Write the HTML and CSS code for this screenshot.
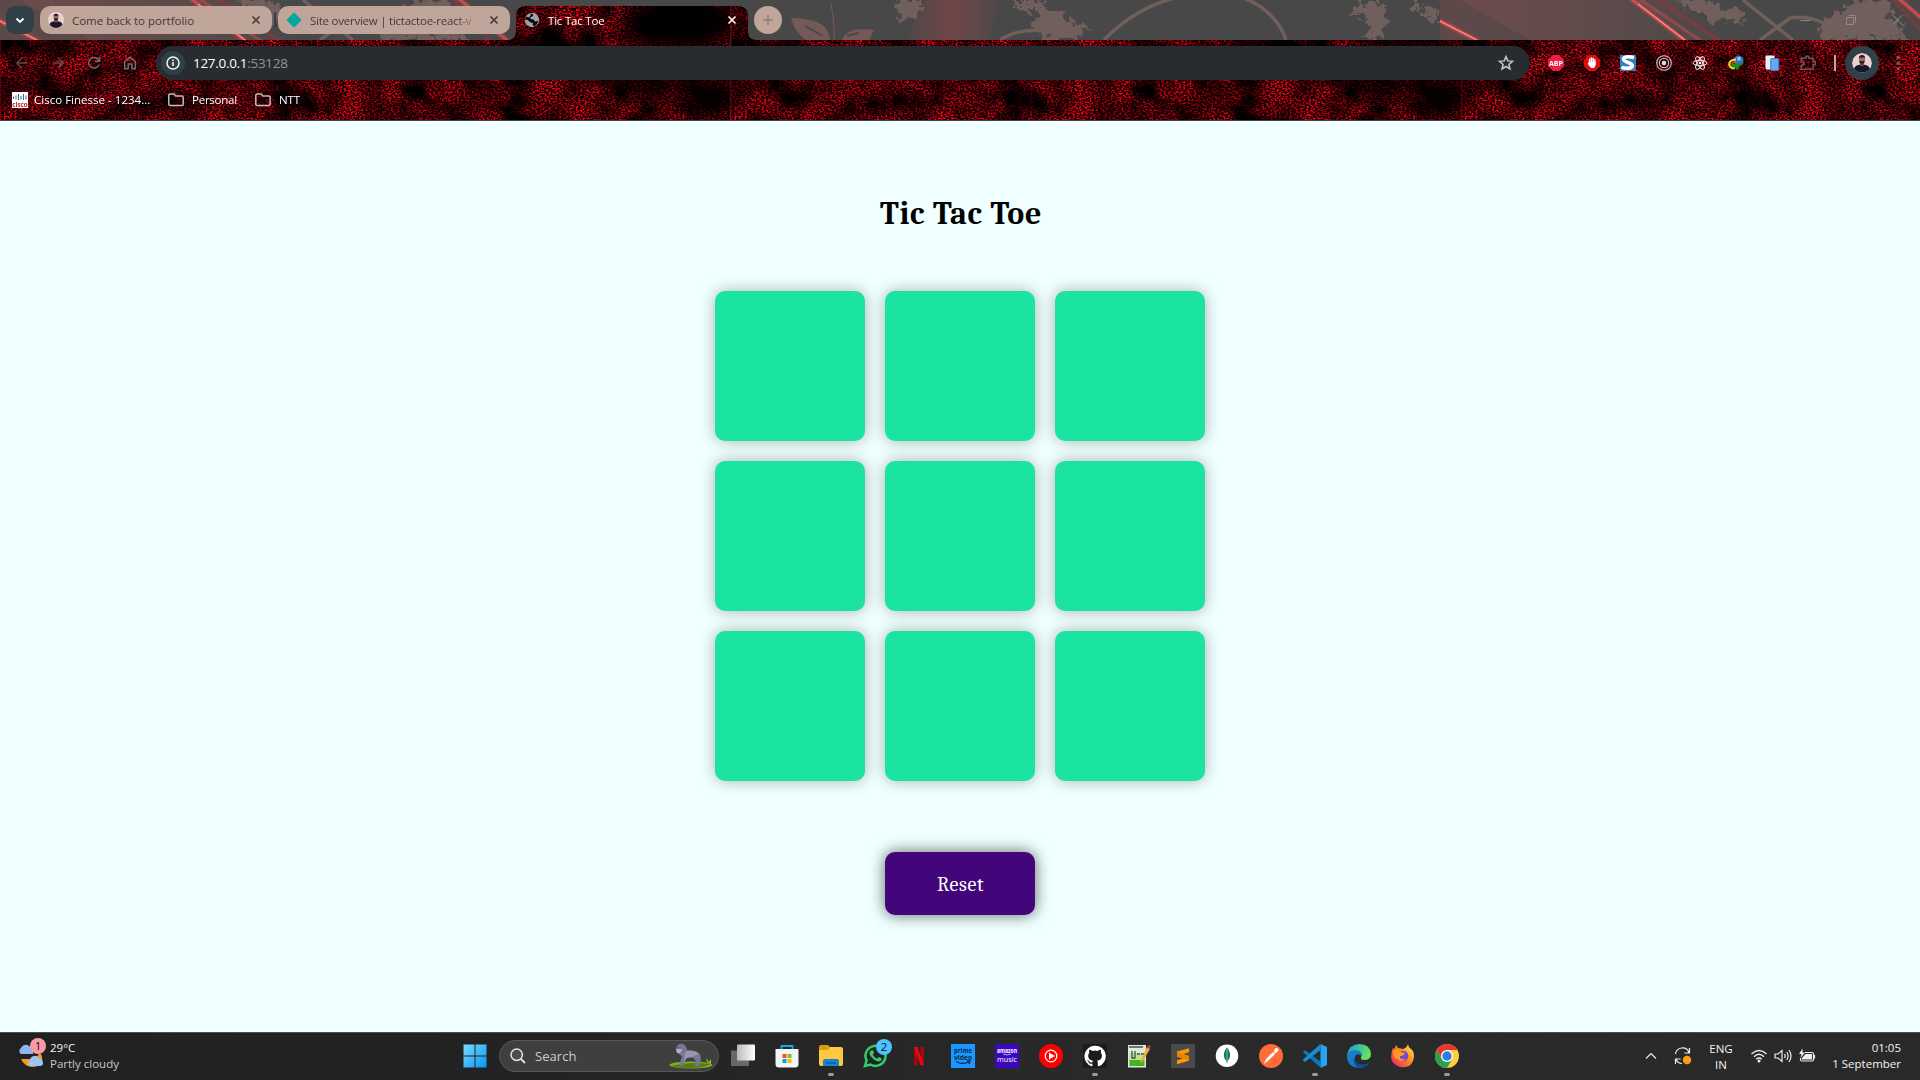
FILE: index.html
```html
<!DOCTYPE html>
<html lang="en">
<head>
<meta charset="utf-8">
<title>Tic Tac Toe</title>
<link rel="stylesheet" href="styles.css">
</head>
<body>
<div class="screen">
<header class="chrome">
  <svg class="theme" width="1920" height="121" viewBox="0 0 1920 121" aria-hidden="true">
    <defs>
      <filter id="grain" x="0" y="0" width="100%" height="100%" color-interpolation-filters="sRGB">
        <feTurbulence type="fractalNoise" baseFrequency="0.47 0.61" numOctaves="3" seed="8" result="fine"/>
        <feColorMatrix in="fine" values="3.2 0 0 0 -1.2  0 0 0 0 0  .3 0 0 0 -.12  0 0 0 0 1" result="red"/>
        <feTurbulence type="fractalNoise" baseFrequency="0.03 0.035" numOctaves="4" seed="21" result="coarse"/>
        <feColorMatrix in="coarse" values="0 2.3 0 0 -.52  0 2.3 0 0 -.52  0 2.3 0 0 -.52  0 0 0 0 1" result="patch"/>
        <feBlend in="red" in2="patch" mode="multiply"/>
      </filter>
      <filter id="soft" x="-50%" y="-50%" width="200%" height="200%"><feGaussianBlur stdDeviation="10"/></filter>
      <filter id="glow" x="-20%" y="-50%" width="140%" height="200%"><feGaussianBlur stdDeviation="1.2"/></filter>
      <filter id="ragged" x="-10%" y="-10%" width="120%" height="120%">
        <feTurbulence type="fractalNoise" baseFrequency="0.16" numOctaves="4" seed="4"/>
        <feDisplacementMap in="SourceGraphic" scale="20" xChannelSelector="R" yChannelSelector="G"/>
      </filter>
      <clipPath id="tile"><path d="M0 0h730.500v121H0z"/></clipPath>
      <g id="rock" clip-path="url(#tile)">
        <rect width="731" height="121" fill="#100" filter="url(#grain)"/>
        <g filter="url(#soft)" fill="#000">
          <ellipse cx="680" cy="22" rx="60" ry="30"/>
          <ellipse cx="712" cy="98" rx="24" ry="24"/>
          <ellipse cx="650" cy="78" rx="42" ry="12"/>
          <ellipse cx="474" cy="98" rx="14" ry="20" opacity=".6"/>
          <ellipse cx="20" cy="82" rx="50" ry="9" opacity=".5"/>
        </g>
        <path d="M.5 0v121" stroke="#700010" opacity=".7"/>
      </g>
      <linearGradient id="warm" x1="0" x2="1" y1="0" y2="0">
        <stop offset="0" stop-color="#714b4b"/><stop offset=".45" stop-color="#624b4b"/><stop offset="1" stop-color="#4a4848"/>
      </linearGradient>
      <linearGradient id="ember" x1="0" x2="1" y1="0" y2="0">
        <stop offset="0" stop-color="#4a4848"/><stop offset=".45" stop-color="#704646"/><stop offset=".7" stop-color="#634848"/><stop offset="1" stop-color="#4a4848"/>
      </linearGradient>
      <clipPath id="strip"><path d="M0 0H1920V40H757Q748 40 748 31V16Q748 6 738 6H526Q516 6 516 16V31Q516 40 507 40H0Z"/></clipPath>
      <clipPath id="art-tile"><path d="M0 0h1440v40H0z"/></clipPath>
      <g id="art" clip-path="url(#art-tile)">
        <rect width="1440" height="40" fill="#484848"/>
        <path d="M0 0h240l50 40H0z" fill="url(#warm)"/>
        <path d="M0 0h20l70 40H0z" fill="#484848" opacity=".45"/>
        <path d="M925 0h75l-10 40h-85z" fill="url(#ember)"/>
        <g fill="#705f5b" filter="url(#ragged)">
          <path d="M240 0h32l8 7h18l8 8-6 8-13-4-14 4-15-13-18-2z"/>
          <path d="M378 40l8-22 18-11 12-7h30l9 9-9 8 13 6 7 16z"/>
          <path d="M895 0h28l-6 14-12 7-8-7zM1015 0h30l-3 8 20 2 8 13 20 4-12 12h-36l-10-12 7-15-20-3z"/>
          <path d="M1364 0l18 4 4 22-8 14h-18l9-8-3-14-14-5zM1412 0h8v12h-6zM1424 6l14 5-2 13-10-7z"/>
        </g>
        <g fill="none" stroke="#705f5b" stroke-width="3.500">
          <path d="M1000 40Q1018 28 1045 31M1104 40C1150-8 1220-18 1256 4 1270 12 1282 26 1286 40M303 0l50 40M320 40l30-22q30-5 56 22"/>
        </g>
        <path d="M791 18q38 0 39 22h-24q-11-7-15-22zM842 40q6-14 32-10l-5 10z" fill="#755959"/>
        <path d="M805 26l18 10M847 36l12-3" stroke="#484848" stroke-width="2"/>
        <path d="M831 4q4 20 3 36" fill="none" stroke="#805858"/>
        <g filter="url(#glow)" stroke="#ff4a50" stroke-width="2.800">
          <path d="M-4 19L42 43M190-2l58 45M456-4l54 47"/>
          <path d="M198-2l66 45" stroke-width="1.400"/>
          <path d="M215-2l68 45M450-4l40 45" stroke="#823b3e"/>
        </g>
        <path d="M0 21l37 19M198 4l47 36" stroke="#ff8d87" stroke-width="1.200"/>
      </g>
    </defs>
    <use href="#rock"/><use href="#rock" x="730.500"/><use href="#rock" x="1461"/>
    <g clip-path="url(#strip)"><use href="#art"/><use href="#art" x="1440"/></g>
    <path d="M0 120.500H1920" stroke="#3d4347"/>
  </svg>

  <div class="tabs">
    <span class="tab-search"><svg width="10" height="7" viewBox="0 0 10 7"><path d="M1.500 1.500 5 5l3.500-3.500" fill="none" stroke="#fff" stroke-width="1.800"/></svg></span>
    <div class="tab">
      <svg width="16" height="16" viewBox="0 0 24 24"><use href="#portrait"/></svg>
      <span class="tab-title t1">Come back to portfolio</span>
      <svg class="close" width="10" height="10" viewBox="0 0 10 10"><path d="M1.500 1.500l7 7M8.500 1.500l-7 7"/></svg>
    </div>
    <i class="tab-rule"></i>
    <div class="tab">
      <svg width="16" height="16" viewBox="0 0 16 16"><path d="M8 .8 15.200 8 8 15.200.8 8z" fill="#05a5a0" stroke="#05a5a0" stroke-linejoin="round"/></svg>
      <span class="tab-title t2">Site overview | tictactoe-react-v</span>
      <svg class="close" width="10" height="10" viewBox="0 0 10 10"><path d="M1.500 1.500l7 7M8.500 1.500l-7 7"/></svg>
    </div>
    <div class="tab active">
      <svg width="16" height="16" viewBox="0 0 16 16"><circle cx="8" cy="8" r="7.200" fill="#9aa5ae"/><path d="M6 1.500c3 .2 4 1.500 2.500 3L6.500 5v2l3 .4 1.500 2 3.500-.6-2 4-2.500 1.700-1.300-1.500.3-2.300H7L3.500 8 1 7.500 2 4.500l3 1L7 3z" fill="#110608"/></svg>
      <span class="tab-title t3">Tic Tac Toe</span>
      <svg class="close" width="10" height="10" viewBox="0 0 10 10"><path d="M1.500 1.500l7 7M8.500 1.500l-7 7"/></svg>
    </div>
    <span class="new-tab"><svg width="12" height="12" viewBox="0 0 12 12"><path d="M6 1v10M1 6h10" stroke="#8f7c78" stroke-width="1.500"/></svg></span>
    <div class="win-controls">
      <svg width="11" height="12" viewBox="0 0 11 12"><path d="M.5 6.500h10" /></svg>
      <svg width="11" height="12" viewBox="0 0 11 12"><path d="M.5 3.500h7v7h-7zM2.500 1.500h6q1 0 1 1v6"/></svg>
      <svg width="11" height="12" viewBox="0 0 11 12"><path d="M.5 1l10 10M10.500 1l-10 10"/></svg>
    </div>
  </div>

  <div class="toolbar">
    <div class="nav">
      <svg class="dim" width="16" height="16" viewBox="0 0 16 16"><path d="M13.500 8H3M8 2.800 2.800 8 8 13.200"/></svg>
      <svg class="dim" width="16" height="16" viewBox="0 0 16 16"><path d="M2.500 8H13M8 2.800 13.200 8 8 13.200"/></svg>
      <svg width="16" height="16" viewBox="0 0 16 16"><path d="M13 9.500A5.300 5.300 0 1 1 12 4.300L13.300 6M13.500 1.800V6.300H9"/></svg>
      <svg width="16" height="16" viewBox="0 0 16 16"><path d="M2.700 6.500 8 2.300l5.300 4.200v7.200H9.800V9H6.200v4.700H2.700z"/></svg>
    </div>
    <div class="omnibox">
      <span class="site-info"><svg width="16" height="16" viewBox="0 0 16 16"><circle cx="8" cy="8" r="6" fill="none" stroke="#f4f6f6" stroke-width="1.500"/><path d="M8 7v4M8 4.500V6" stroke="#f4f6f6" stroke-width="1.600"/></svg></span>
      <span class="url"><b>127.0.0.1</b>:53128</span>
      <svg class="star" width="16" height="16" viewBox="0 0 16 16"><path d="M8 1.600l1.800 4.300 4.700.4-3.600 3.100 1.100 4.600L8 11.500 4 14l1.100-4.600-3.600-3.100 4.700-.4z" fill="none" stroke="#c5c8ca" stroke-width="1.500"/></svg>
    </div>
    <div class="extensions">
      <svg viewBox="0 0 16 16"><path d="M4.800 0h6.400L16 4.800v6.400L11.200 16H4.800L0 11.200V4.800z" fill="#ed1e45"/><text x="8" y="10.600" text-anchor="middle" font-size="7.500" font-weight="700" fill="#fff" textLength="14" lengthAdjust="spacingAndGlyphs">ABP</text></svg>
      <svg viewBox="0 0 16 16"><path d="M4.800 0h6.400L16 4.800v6.400L11.200 16H4.800L0 11.200V4.800z" fill="#e40d0d"/><path d="M5.600 8V4.300M7.400 7.500V3M9.200 7.500V3.500M10.900 8V5" stroke="#fff" stroke-width="1.500" stroke-linecap="round"/><path d="M4.900 7h6.800v3l-1.500 3H7.100L5 10.800 3.700 8.500z" fill="#fff"/></svg>
      <svg viewBox="0 0 16 16"><path d="M0 0h16v16H0z" fill="#377fb9"/><path d="M14 2.500Q5 .6 3.500 3.600C2.500 8 13 7 12.300 11 11.600 14 5 13.500 1.500 12.400" fill="none" stroke="#fff" stroke-width="3.500"/></svg>
      <svg viewBox="0 0 16 16"><g fill="none" stroke="#ccc9c9" stroke-width="1.100"><circle cx="8" cy="8" r="7.300"/><circle cx="8" cy="8" r="4.700"/></g><circle cx="8" cy="8" r="2.300" fill="#ddd"/></svg>
      <svg viewBox="0 0 16 16"><g fill="none" stroke="#eee" stroke-width="1"><ellipse cx="8" cy="8" rx="7" ry="2.700"/><ellipse cx="8" cy="8" rx="7" ry="2.700" transform="rotate(60 8 8)"/><ellipse cx="8" cy="8" rx="7" ry="2.700" transform="rotate(120 8 8)"/></g><circle cx="8" cy="8" r="1.300" fill="#fff"/></svg>
      <svg viewBox="0 0 16 16"><circle cx="10.500" cy="5.500" r="5" fill="#3973bd"/><circle cx="11" cy="3.800" r="2" fill="#8ac0eb"/><path d="M8 4.500Q1 5 1.300 9.500 2 13.500 7 13" fill="none" stroke="#e7dc24" stroke-width="2.200"/><path d="M8 7Q4 7 3.500 10" fill="none" stroke="#d94927" stroke-width="1.300"/><path d="M4 9l12-1-5 4-2 4-1-3-4-1z" fill="#168e22"/></svg>
      <svg viewBox="0 0 16 16"><rect x="1.500" y=".5" width="9" height="14" rx="1" fill="#e9f0f8"/><rect x="6.700" y="3.500" width="8" height="12" rx="1" fill="#65a6f5" stroke="#3f7ec5"/></svg>
      <svg viewBox="0 0 16 16"><path d="M1.200 3.300h4.600V1.200h2.900v2.100h4.500v3.500h2v3h-2v4.400h-12v-3.800q2.800 0 2.800-1.800T1.200 6.800z" fill="none" stroke="#625b5d" stroke-width="1.500" stroke-linejoin="round"/></svg>
    </div>
    <i class="tool-rule"></i>
    <span class="profile"><svg width="20" height="20" viewBox="0 0 24 24"><g id="portrait"><circle cx="12" cy="12" r="12" fill="#ead0d1"/><path d="M2.500 19Q3 15 9 14l3 1.500 3-1.500q6 1 6.500 5A12 12 0 0 1 2.500 19z" fill="#17182d"/><path d="M9.500 10h5v5L12 16l-2.500-1z" fill="#704a43"/><ellipse cx="12" cy="8" rx="3.500" ry="4.800" fill="#9b695d"/><path d="M8.300 7Q8 2.500 12 2.500T15.700 7L14.500 5.500h-5zM8.800 9l1.700.8h3L15.200 9q0 4-3.200 4T8.800 9z" fill="#241719"/></g></svg></span>
    <svg class="kebab" width="4" height="16" viewBox="0 0 4 16" fill="#726669"><circle cx="2" cy="2.500" r="1.500"/><circle cx="2" cy="8" r="1.500"/><circle cx="2" cy="13.500" r="1.500"/></svg>
  </div>

  <div class="bookmarks">
    <svg width="16" height="16" viewBox="0 0 16 16"><path d="M0 0h16v16H0z" fill="#fff"/><path d="M1.500 4.500v2.500M4 3.500v4M6.500 2v6M9 4v3.500M11.500 2v6M14 3.500v4" stroke="#356b82"/><text x=".3" y="14.500" font-size="7.500" font-weight="700" fill="#c22232" textLength="15.400" lengthAdjust="spacingAndGlyphs">cisco</text></svg>
    <span class="b1">Cisco Finesse - 1234...</span>
    <svg width="16" height="14" viewBox="0 0 16 14"><path d="M.8 2.200Q.8 1 2 1h4l1.700 2h6.200q1.300 0 1.300 1.200v7q0 1.300-1.300 1.300H2Q.8 12.500.8 11.300z" fill="none" stroke="#c4bcbd" stroke-width="1.500"/></svg>
    <span class="b2">Personal</span>
    <svg width="16" height="14" viewBox="0 0 16 14"><path d="M.8 2.200Q.8 1 2 1h4l1.700 2h6.200q1.300 0 1.300 1.200v7q0 1.300-1.300 1.300H2Q.8 12.500.8 11.300z" fill="none" stroke="#c4bcbd" stroke-width="1.500"/></svg>
    <span class="b3">NTT</span>
  </div>
</header>

<main class="game">
  <h1>Tic Tac Toe</h1>
  <div class="board">
    <button class="cell" aria-label="1"></button><button class="cell" aria-label="2"></button><button class="cell" aria-label="3"></button>
    <button class="cell" aria-label="4"></button><button class="cell" aria-label="5"></button><button class="cell" aria-label="6"></button>
    <button class="cell" aria-label="7"></button><button class="cell" aria-label="8"></button><button class="cell" aria-label="9"></button>
  </div>
  <button class="reset">Reset</button>
</main>

<footer class="taskbar">
  <div class="weather">
    <div class="weather-icon">
      <svg width="26" height="24" viewBox="0 0 26 24"><path d="M3 15h10q7-1 8-6 4 1 3 8-3 6-10 6Q6 22 3 15z" fill="#f29a1f"/><path d="M3 10a3.500 3.500 0 0 1 0-6 5 5 0 0 1 8-2q3 1 4 5v3z" fill="#8fb4ee"/><path d="M12 22a3.500 3.500 0 0 1 0-6 5 5 0 0 1 9-2q4 1 4 5 0 3-3 3z" fill="#9dc4f4"/></svg>
      <span class="badge">1</span>
    </div>
    <p><b>29°C</b><span>Partly cloudy</span></p>
  </div>
  <span class="start"><svg width="24" height="24" viewBox="0 0 24 24"><defs><linearGradient id="win" x1="0" y1="0" x2="1" y2="1"><stop stop-color="#78dbff"/><stop offset="1" stop-color="#0794f5"/></linearGradient></defs><path d="M.5.500H11.500V11.500H.5zM12.500.500h11v11h-11zM.5 12.500h11v11H.5zM12.500 12.500h11v11h-11z" fill="url(#win)"/></svg></span>
  <div class="search">
    <svg width="16" height="16" viewBox="0 0 16 16"><circle cx="6.700" cy="6.700" r="5.700" fill="#4a4d50" stroke="#e5e5e5" stroke-width="1.500"/><path d="M10.800 10.800 15 15" stroke="#e5e5e5" stroke-width="1.800"/></svg>
    <span>Search</span>
    <svg class="gorilla" width="44" height="26" viewBox="0 0 44 26"><ellipse cx="22" cy="22" rx="21.500" ry="3.500" fill="#86ad24"/><path d="M2 23q18-5 40-2-8 4-20 4Q8 25 2 23z" fill="#577d1b"/><path d="M38 19l-1-4 3 4 2-3v5z" fill="#9bb829"/><path d="M10 23l3-10-5-3-1-5q2-5 7-4 3 1 4 6l8 1q6 1 6 9l-2 6h-4l1-5-4-4-6 1-3 8z" fill="#777793"/><path d="M18 8q9-1 12 4-4-1-6 2l-6 1-3 4 1-9z" fill="#9896ae"/><path d="M7 6l4-2 2 3-2 3H8z" fill="#b1b2bd"/><path d="M8 5h4" stroke="#34364a"/></svg>
  </div>
  <nav class="apps">
    <span class="app"><svg viewBox="0 0 24 24"><defs><linearGradient id="tv"><stop stop-color="#bbb"/><stop offset="1" stop-color="#fff"/></linearGradient></defs><rect y="6.500" width="18" height="15.500" rx="1" fill="#686868"/><rect x="6" y=".5" width="18" height="16" rx="1" fill="url(#tv)"/></svg></span>
    <span class="app"><svg viewBox="0 0 24 24"><path d="M6.500 6V2h11v4" fill="none" stroke="#0bacea" stroke-width="1.800"/><path d="M.5 5h23v15q0 3.500-3.500 3.500H4Q.5 23.500.5 20z" fill="#f4f4f4"/><path d="M7.500 10h4v4h-4z" fill="#f1511b"/><path d="M12.500 10h4v4h-4z" fill="#80c21d"/><path d="M7.500 15h4v4h-4z" fill="#00a4e5"/><path d="M12.500 15h4v4h-4z" fill="#fbb900"/></svg></span>
    <span class="app running"><svg viewBox="0 0 24 24"><path d="M0 3q0-2 2-2h7l3 3v5H0z" fill="#df9a14"/><path d="M0 6h9l2-3h11q2 0 2 2v15q0 2-2 2H2q-2 0-2-2z" fill="#ffc83e"/><path d="M4 22v-5q0-2 2-2h12q2 0 2 2v5z" fill="#1785d6"/><path d="M7 19h10" stroke="#075aa3" stroke-width="1.500"/></svg></span>
    <span class="app"><svg viewBox="0 0 24 24"><path d="M2 22l1.600-5.600A10 10 0 1 1 7.500 20.500z" fill="#222" stroke="#2ed066" stroke-width="2.500"/><path d="M8 6.500q-3 2 0 6t7 5q4 0 3.500-3.200L15.700 13l-1.400 1.700q-3-.8-4.600-4L11 9 10 6.300z" fill="#2ed066"/></svg><span class="count">2</span></span>
    <span class="app"><svg viewBox="0 0 24 24"><path d="M7 3h3.500v18L7 21.500zM13.500 3H17v18.500l-3.500-.5z" fill="#a70710"/><path d="M7 3h3.500L17 21.500l-3.700-.4z" fill="#e50914"/></svg></span>
    <span class="app"><svg viewBox="0 0 24 24"><path d="M0 0h24v24H0z" fill="#1a98ff"/><g fill="#05294a" font-weight="700" font-size="7"><text x="3" y="8.500" textLength="18" lengthAdjust="spacingAndGlyphs">prime</text><text x="3" y="15.500" textLength="18" lengthAdjust="spacingAndGlyphs">video</text></g><path d="M5 17.500q7 4 13 0M16 17h3l-1 3" fill="none" stroke="#05294a" stroke-width="1.300"/></svg></span>
    <span class="app"><svg viewBox="0 0 24 24"><path d="M0 0h24v24H0z" fill="#3c08bf"/><g fill="#fff" font-size="6.500"><text x="2" y="8.500" font-weight="700" textLength="20" lengthAdjust="spacingAndGlyphs">amazon</text><text x="2" y="18" font-size="8" textLength="20" lengthAdjust="spacingAndGlyphs">music</text></g><path d="M8 10q4 2 8 0" fill="none" stroke="#b2a0ff"/></svg></span>
    <span class="app"><svg viewBox="0 0 24 24"><circle cx="12" cy="12" r="12" fill="#f00"/><circle cx="12" cy="12" r="5.800" fill="none" stroke="#fff" stroke-width="1.300"/><path d="M10 8.500v7l6-3.500z" fill="#fff"/></svg></span>
    <span class="app running"><svg viewBox="0 0 24 24"><path d="M0 0h24v24H0z" fill="#1c1c1e"/><path d="M12 1.700a10.500 10.500 0 0 0-3.300 20.500c.5.100.7-.2.700-.5v-2c-3 .6-3.600-1.300-3.600-1.300-.5-1.200-1.200-1.500-1.200-1.500-1-.7.100-.7.100-.7 1 .1 1.600 1.100 1.600 1.100 1 1.700 2.500 1.200 3.100.9.100-.7.400-1.200.7-1.500-2.400-.3-4.900-1.200-4.900-5.200 0-1.100.4-2.100 1.100-2.800-.1-.3-.5-1.400.1-2.900 0 0 .9-.3 3 1.100a10 10 0 0 1 5.300 0c2-1.400 3-1.100 3-1.100.5 1.500.2 2.600.1 2.900.7.700 1.100 1.700 1.100 2.800 0 4-2.500 4.900-4.900 5.200.4.300.8 1 .8 2v3c0 .3.200.6.700.5A10.500 10.500 0 0 0 12 1.700z" fill="#fff"/></svg></span>
    <span class="app"><svg viewBox="0 0 24 24"><path d="M1 1h18v22.500H1z" fill="#e2e8df"/><path d="M2.500 15h15v7h-15z" fill="#46b31d"/><path d="M2.500 9h15v7h-15z" fill="#b8e693"/><path d="M2 3h14M5 7v7h3V7M10 10h3M14 10h3" stroke="#435345" stroke-width="1.300" fill="none"/><path d="M14 16l6-13 3 2-7 12-3 2z" fill="#e8ad36"/><path d="M20 3l1.500-2 2 1-.5 3z" fill="#aa4548"/></svg></span>
    <span class="app"><svg viewBox="0 0 24 24"><rect width="24" height="24" rx="1.500" fill="#4b4b4b"/><path d="M6 7.500l12-3.300v4L12 10l6 2v4.700L6 20.200v-4l6-1.800-6-2z" fill="#ff9800"/><path d="M12 10l6 2v4.500l-6-2.100-6-2V8z" fill="#e88500"/></svg></span>
    <span class="app"><svg viewBox="0 0 24 24"><circle cx="12" cy="11.700" r="11.300" fill="#fff"/><path d="M12 3.500C8 8 8 14 11.500 17v2h1v-2C16 14 16 8 12 3.500z" fill="#147850"/><path d="M12 5v13" stroke="#b1d5c3" stroke-width=".7"/></svg></span>
    <span class="app"><svg viewBox="0 0 24 24"><circle cx="12" cy="12" r="12" fill="#ff6c37"/><path d="M5 20l2-5 7-7 2 2-6 6zM14.500 7.500l2-2 2 2-2 2z" fill="#fff"/><circle cx="17.500" cy="6" r="2" fill="#fff"/></svg></span>
    <span class="app running"><svg viewBox="0 0 24 24"><path d="M17.500 0L24 3v18l-6.500 3z" fill="#27a3f1"/><path d="M0 8l2-2 16 12v6L.3 8.500z" fill="#0878bd"/><path d="M0 15.500L17.500 0v6L2 18l-2-1.500z" fill="#168ed7"/></svg></span>
    <span class="app"><svg viewBox="0 0 24 24"><defs><linearGradient id="ed" x1="0" y1="0" x2="1" y2=".4"><stop stop-color="#139be0"/><stop offset="1" stop-color="#63e45c"/></linearGradient></defs><path d="M0 11Q2 0 12.500 0T24 10q0 6-7 6-4 0-3-3 2-3-1-5-5-3-10 1Q1 10 0 13z" fill="url(#ed)"/><path d="M0 12Q2 6 8 6q7 0 6.500 6-5-4-6.500 1-1 8 7 8 4 0 7-2-4 5-10 5Q0 23 0 12z" fill="#167ec6"/><path d="M8 12q-2 11 13 8-4 4-9 4Q4 20 8 12z" fill="#0e4c99"/></svg></span>
    <span class="app"><svg viewBox="0 0 24 24"><defs><linearGradient id="ff" x1="1" y1="0" x2="0" y2="1"><stop stop-color="#fff44f"/><stop offset=".45" stop-color="#ff8a22"/><stop offset="1" stop-color="#ee1573"/></linearGradient></defs><path d="M17 0q-1 4-5 5L7 4 5 1 3.500 5 2 4Q-4 19 9 23q13 2 14-11 0-5-3-7-3-2-3-5z" fill="url(#ff)"/><circle cx="12" cy="12" r="5.300" fill="#7848cc"/><path d="M2 7q5-2 8 1l4 1q-1 3-5 3-1 4 6 3-4 4-8 0-4 1-5-8z" fill="#ff9a27"/></svg></span>
    <span class="app running"><svg viewBox="0 0 24 24"><circle cx="12" cy="12" r="12" fill="#ffcd40"/><path d="M1.600 6A12 12 0 0 1 22.400 6H12L6.800 15z" fill="#e5392f"/><path d="M1.600 6A12 12 0 0 0 12 24l5.200-9H6.800z" fill="#27a34d"/><circle cx="12" cy="12" r="6" fill="#fff"/><circle cx="12" cy="12" r="4.700" fill="#287de8"/></svg></span>
  </nav>
  <div class="tray">
    <svg width="12" height="8" viewBox="0 0 12 8"><path d="M1 6.500l5-5 5 5"/></svg>
    <svg width="18" height="18" viewBox="0 0 18 18"><path d="M1.500 7A7 7 0 0 1 15 5.500M15.500 1v5h-5M8 16.500q-4 0-6-4M1.500 17v-5h5"/><circle cx="13" cy="13" r="4.200" fill="#ff9c13" stroke="none"/></svg>
    <p class="lang"><span>ENG</span><span>IN</span></p>
    <svg width="18" height="16" viewBox="0 0 18 16"><path d="M1.500 6Q9-1 16.500 6M4 8.700q5-4.700 10 0M6.300 11.200q2.700-2.500 5.400 0" stroke-width="1.400"/><circle cx="9" cy="13" r="1.500" fill="#eee" stroke="none"/></svg>
    <svg width="18" height="16" viewBox="0 0 18 16"><path d="M1 6h3l4-3.500v11L4 10H1zM10.500 6q1.300 2 0 4M12.700 4q2.800 4 0 8M15 2q4 6 0 12"/></svg>
    <svg width="18" height="16" viewBox="0 0 18 16"><path d="M7 4.500h7q1.500 0 1.500 1.500v5.500q0 1.500-1.500 1.500H4q-1.500 0-1.500-1.500V10M16.500 7v3.500"/><path d="M7.500 6H14v5.500H4V10z" fill="#eee" stroke="none"/><path d="M4.500.5 1 6h2.500L2.500 10 7 4.500H4.500z" fill="#eee" stroke="none"/></svg>
    <p class="clock"><span>01:05</span><span>1 September</span></p>
  </div>
</footer>
</div>
</body>
</html>
```
FILE: styles.css
```css
* { box-sizing: border-box; }
body { margin: 0; font-family: "Open Sans", "Noto Sans", sans-serif; }
p { margin: 0; }
svg { display: block; flex: none; }
button { border: 0; padding: 0; }

.screen {
  width: 1920px;
  height: 1080px;
  display: flex;
  flex-direction: column;
  overflow: hidden;
  background: #f0ffff;
}

/* Browser window */
.chrome {
  position: relative;
  height: 121px;
  flex: none;
  isolation: isolate;
  font-size: 11.5px;
}
.theme { position: absolute; inset: 0; z-index: -1; }
.tabs { display: flex; align-items: center; height: 40px; padding: 0 15px 0 6px; }
.tab-search {
  width: 28px; height: 28px; margin-right: 6px;
  display: grid; place-items: center;
  border-radius: 9px; background: #2f4046;
}
.tab {
  width: 232px; height: 28px; flex: none;
  display: flex; align-items: center;
  padding: 0 11px 0 8px;
  border-radius: 10px; background: #c0a59b; color: #443936;
}
.tab-rule { width: 2px; height: 16px; margin: 0 2px; background: #2f4046; border-radius: 1px; }
.tab.active { margin-left: 6px; background: none; color: #fff; }
.tab-title { margin-left: 8px; overflow: hidden; white-space: nowrap; line-height: 18px; padding-top: 1px; }
.t1 { letter-spacing: -.02px; }
.t2 {
  width: 166px; letter-spacing: -.24px;
  -webkit-mask-image: linear-gradient(90deg, #000 88%, transparent 102%);
  mask-image: linear-gradient(90deg, #000 88%, transparent 102%);
}
.t3 { letter-spacing: -.2px; }
.close { margin-left: auto; stroke: currentColor; stroke-width: 1.6; }
.new-tab {
  width: 28px; height: 28px; margin-left: 6px;
  display: grid; place-items: center;
  border-radius: 50%; background: #c0a59b;
}
.win-controls { display: flex; gap: 35px; margin-left: auto; margin-right: 2px; fill: none; stroke: #918c8b; }

.toolbar { height: 46px; display: flex; align-items: center; padding: 0 20px 0 14px; }
.nav { width: 142px; display: flex; gap: 20px; fill: none; stroke: #756a6c; stroke-width: 1.5; }
.dim { opacity: .65; }
.omnibox {
  width: 1374px; height: 34px;
  display: flex; align-items: center;
  padding: 0 16px 0 5px;
  border-radius: 17px; background: #282c30;
}
.site-info { width: 24px; height: 24px; display: grid; place-items: center; border-radius: 50%; background: #2f4046; }
.url { margin-left: 8px; font-size: 13.5px; letter-spacing: -.3px; color: #8f9598; }
.url b { font-weight: 400; color: #fff; }
.star { margin-left: auto; }
.extensions { display: flex; gap: 20px; margin-left: 18px; }
.extensions svg { width: 16px; height: 16px; }
.tool-rule { width: 2px; height: 16px; margin-left: 18px; background: #c0a59b; }
.profile { width: 34px; height: 34px; margin-left: 9px; display: grid; place-items: center; border-radius: 50%; background: #2f4046; }
.kebab { margin-left: auto; }
.profile svg { border-radius: 50%; }

.bookmarks { height: 28px; display: flex; align-items: center; padding-left: 12px; font-size: 11.5px; color: #fff; white-space: nowrap; }
.bookmarks span { overflow: hidden; padding-bottom: 2px; }
.b1 { width: 116px; margin: 0 18px 0 6px; letter-spacing: .02px; }
.b2 { width: 46px; margin: 0 17px 0 8px; letter-spacing: -.25px; }
.b3 { margin-left: 8px; letter-spacing: -.1px; }

/* Game */
.game { flex: 1; display: flex; flex-direction: column; align-items: center; font-family: Cambria, "Liberation Serif", serif; }
.game h1 { margin: 74px 0 58px; padding-left: 2px; height: 38px; font-size: 32px; line-height: 38px; letter-spacing: .75px; color: #000; }
.board { display: grid; grid-template: repeat(3, 150px) / repeat(3, 150px); gap: 20px; }
.cell { border-radius: 10px; background: #1be4a0; box-shadow: 0 0 16px rgba(0, 0, 0, .3); }
.reset {
  width: 150px; height: 63px; margin-top: 71px;
  border-radius: 10px; background: #42067a; color: #fff;
  font: 20px/65px Cambria, "Liberation Serif", serif; letter-spacing: .65px;
  padding-left: 1px;
  box-shadow: 0 0 16px rgba(0, 0, 0, .6);
}

/* Taskbar */
.taskbar {
  height: 48px; flex: none;
  display: flex; align-items: center;
  padding-bottom: 2px;
  border-top: 1px solid #4b5050;
  background: linear-gradient(90deg, #212121, #222 25%, #2a2a2a 60%, #292929);
  font-size: 11.5px; line-height: 16px; color: #f4f4f4;
}
.weather { width: 452px; display: flex; align-items: center; padding-left: 18px; }
.weather-icon { position: relative; width: 32px; padding-top: 1px; }
.badge {
  position: absolute; left: 12px; top: -5px;
  width: 16px; height: 16px; border-radius: 50%;
  background: #ff99a4; color: #111; text-align: center;
}
.weather b { font-weight: 400; }
.weather p span { color: #c9c9c9; }
.weather p > *, .lang span, .clock span { display: block; }
.start { width: 45px; display: grid; place-items: center; }
.search {
  width: 220px; height: 32px; margin: 0 2px;
  display: flex; align-items: center;
  padding: 0 5px 0 10px;
  border: 1px solid #585858; border-radius: 16px;
  background: #3f3f3f; font-size: 13px; color: #ccc;
}
.search span { margin-left: 9px; letter-spacing: .05px; }
.gorilla { margin-left: auto; }
.apps { display: flex; }
.app { position: relative; width: 44px; height: 40px; display: grid; place-items: center; }
.app > svg { width: 24px; height: 24px; }
.running::after { content: ""; position: absolute; left: 19px; bottom: 0; width: 6px; height: 3px; border-radius: 2px; background: #9b9b9b; }
.count {
  position: absolute; right: 5px; top: 3px;
  width: 16px; height: 16px; border-radius: 50%;
  background: #4cc2ff; color: #111; text-align: center;
}
.tray { display: flex; align-items: center; margin-left: auto; padding-right: 19px; fill: none; stroke: #eee; stroke-width: 1.2; }
.tray > svg:nth-of-type(2) { margin-left: 17px; }
.lang { width: 40px; margin: 2px 9px 0 9px; text-align: center; }
.tray > svg:nth-of-type(n+4) { margin-left: 6px; }
.clock { width: 85px; text-align: right; }
```
